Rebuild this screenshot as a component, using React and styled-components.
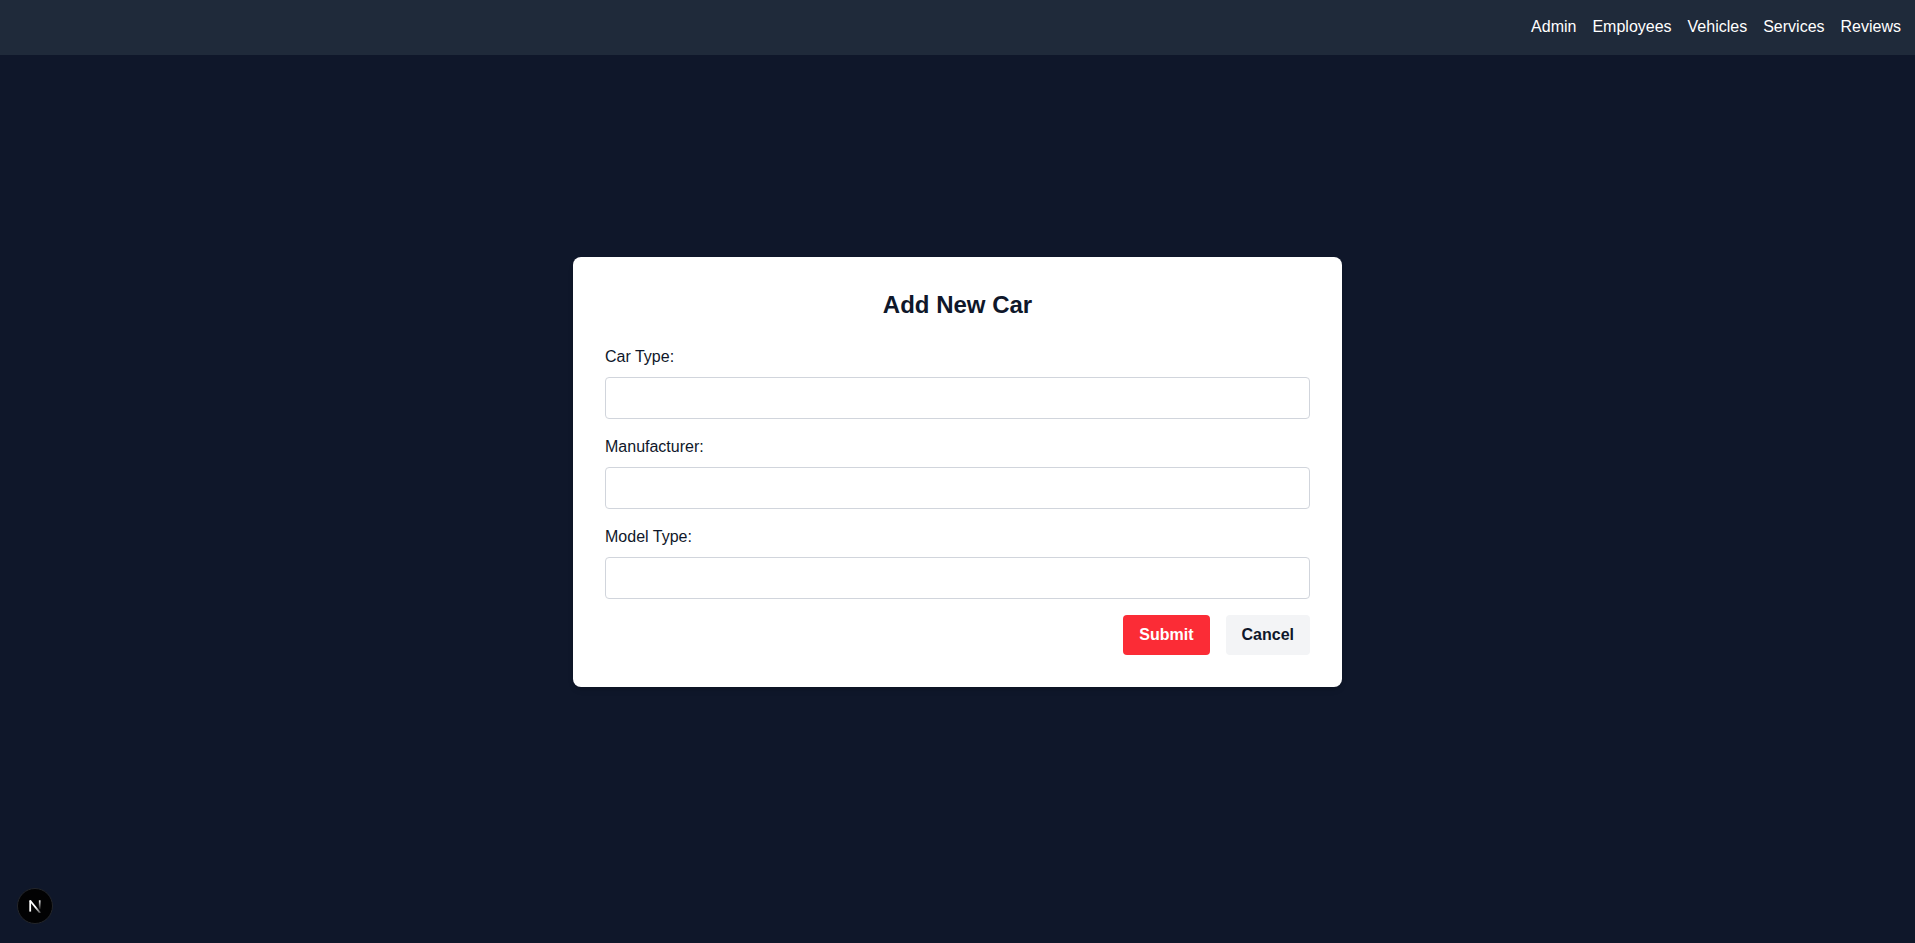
import React from "react";
import styled, { createGlobalStyle } from "styled-components";

const GlobalStyle = createGlobalStyle`
  *, *::before, *::after { box-sizing: border-box; }
  body {
    margin: 0;
    background: #0f172a;
    color: #0f172a;
    font-family: "Liberation Sans", Arial, Helvetica, sans-serif;
    font-size: 16px;
    line-height: 24px;
  }
`;

const Page = styled.div`
  display: grid;
  min-height: 100vh;
`;

const Header = styled.header`
  position: fixed;
  top: 0;
  left: 0;
  right: 0;
  padding: 15px 14px 16px;
  background: #1f2a3a;
`;

const NavList = styled.nav`
  display: flex;
  justify-content: flex-end;
  gap: 16px;
`;

const NavLink = styled.a`
  color: #ffffff;
  text-decoration: none;
`;

const Main = styled.main`
  display: grid;
  place-items: center;
`;

const Card = styled.form`
  width: 100%;
  max-width: 769px;
  padding: 32px;
  border-radius: 8px;
  background: #ffffff;
  box-shadow: 0 4px 6px -1px rgba(0, 0, 0, 0.1), 0 2px 4px -2px rgba(0, 0, 0, 0.1);
`;

const Title = styled.h1`
  margin: 0 0 24px;
  font-size: 24px;
  line-height: 32px;
  font-weight: 700;
  text-align: center;
`;

const Field = styled.div`
  display: flex;
  flex-direction: column;
  gap: 8px;
  margin-bottom: 16px;
`;

const Input = styled.input`
  width: 100%;
  height: 42px;
  padding: 8px;
  border: 1px solid #d1d5dc;
  border-radius: 4px;
  background: #ffffff;
  color: inherit;
  font: inherit;
`;

const Actions = styled.div`
  display: flex;
  justify-content: flex-end;
  gap: 16px;
`;

const Button = styled.button`
  padding: 8px 16px;
  border: 0;
  border-radius: 4px;
  background: ${({ $primary }) => ($primary ? "#fb2c36" : "#f3f4f6")};
  color: ${({ $primary }) => ($primary ? "#ffffff" : "#0f172a")};
  font: inherit;
  font-weight: 700;
  cursor: pointer;
`;

const DevBadge = styled.button`
  position: fixed;
  left: 17px;
  bottom: 19px;
  display: grid;
  place-items: center;
  width: 36px;
  height: 36px;
  padding: 0;
  border: 1px solid #24262b;
  border-radius: 50%;
  background: #020203;
`;

const links = ["Admin", "Employees", "Vehicles", "Services", "Reviews"];
const fields = [
  { id: "carType", label: "Car Type:" },
  { id: "manufacturer", label: "Manufacturer:" },
  { id: "modelType", label: "Model Type:" },
];

function NextMark() {
  return (
    <svg width="14" height="14" viewBox="0 0 14 14" fill="none" aria-hidden="true">
      <defs>
        <linearGradient id="diagonal" gradientUnits="userSpaceOnUse" x1="8" y1="8" x2="13" y2="14">
          <stop stopColor="#fff" />
          <stop offset="1" stopColor="#fff" stopOpacity="0.2" />
        </linearGradient>
        <linearGradient id="stem" gradientUnits="userSpaceOnUse" x1="11" y1="1" x2="11" y2="11">
          <stop stopColor="#fff" />
          <stop offset="1" stopColor="#fff" stopOpacity="0" />
        </linearGradient>
      </defs>
      <path d="M2.2 12.6V1.4" stroke="#fff" strokeWidth="1.8" />
      <path d="M2 1.5L12.2 14" stroke="url(#diagonal)" strokeWidth="1.9" />
      <path d="M11.7 1.3V10.5" stroke="url(#stem)" strokeWidth="1.7" />
    </svg>
  );
}

export default function App() {
  return (
    <Page>
      <GlobalStyle />
      <Header>
        <NavList>
          {links.map((name) => (
            <NavLink key={name} href={`#${name.toLowerCase()}`}>{name}</NavLink>
          ))}
        </NavList>
      </Header>
      <Main>
        <Card onSubmit={(event) => event.preventDefault()}>
          <Title>Add New Car</Title>
          {fields.map(({ id, label }) => (
            <Field key={id}>
              <label htmlFor={id}>{label}</label>
              <Input id={id} name={id} type="text" />
            </Field>
          ))}
          <Actions>
            <Button type="submit" $primary>Submit</Button>
            <Button type="button">Cancel</Button>
          </Actions>
        </Card>
      </Main>
      <DevBadge type="button" aria-label="Open Next.js Dev Tools">
        <NextMark />
      </DevBadge>
    </Page>
  );
}
